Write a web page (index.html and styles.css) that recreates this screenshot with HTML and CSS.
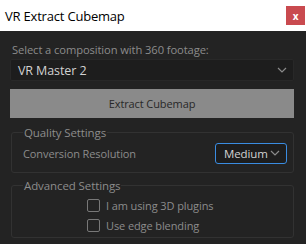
FILE: index.html
```html
<!DOCTYPE html>
<html lang="en">
  <head>
    <meta charset="UTF-8" />
    <title>VR Extract Cubemap</title>
    <link rel="stylesheet" href="styles.css">
  </head>
  <body>
    <div class="titlebar">
      <span class="title">VR Extract Cubemap</span>
      <span class="close">x</span>
    </div>

    <div class="panel">
      <div class="label">Select a composition with 360 footage:</div>
      <div class="select comp">
        <span>VR Master 2</span>
        <svg class="chev" width="10" height="6" viewBox="0 0 10 6"><path d="M1 1l4 4 4-4" fill="none" stroke="#8a8a8a" stroke-width="1.2"/></svg>
      </div>

      <button type="button" class="extract">Extract Cubemap</button>

      <fieldset class="group quality">
        <legend>Quality Settings</legend>
        <div class="row">
          <span class="row-label">Conversion Resolution</span>
          <div class="select res">
            <span>Medium</span>
            <svg class="chev" width="10" height="6" viewBox="0 0 10 6"><path d="M1 1l4 4 4-4" fill="none" stroke="#8a8a8a" stroke-width="1.2"/></svg>
          </div>
        </div>
      </fieldset>

      <fieldset class="group advanced">
        <legend>Advanced Settings</legend>
        <div class="checks">
          <label class="check"><span class="box"></span>I am using 3D plugins</label>
          <label class="check"><span class="box"></span>Use edge blending</label>
        </div>
      </fieldset>
    </div>
  </body>
</html>
```

FILE: styles.css
```css
body {
  margin: 0;
  padding: 0;
  width: 306px;
  height: 244px;
  background: rgb(35, 35, 35);
  font-family: "Open Sans", sans-serif;
  font-size: 11px;
  letter-spacing: -0.1px;
  overflow: hidden;
}
.titlebar {
  height: 31px;
  background: white;
  display: flex;
  align-items: center;
  justify-content: space-between;
}
.title {
  padding-left: 5px;
  font-size: 13px;
  color: black;
  letter-spacing: -0.2px;
}
.close {
  width: 19px;
  height: 19px;
  margin-right: 1px;
  background: rgb(201, 74, 79);
  color: white;
  font-size: 10px;
  font-weight: 700;
  display: flex;
  align-items: center;
  justify-content: center;
  line-height: 1;
}
.panel {
  padding: 9px 12px 0 10px;
}
.label {
  padding-left: 2px;
  color: rgb(140, 140, 140);
  height: 19px;
  line-height: 19px;
  font-size: 11.2px;
}
.select {
  display: flex;
  align-items: center;
  justify-content: space-between;
  box-sizing: border-box;
  background: rgb(29, 29, 29);
  border: 1px solid rgb(40, 40, 40);
  border-radius: 2px;
  color: rgb(210, 210, 210);
}
.comp {
  height: 22px;
  padding: 0 6px 0 7px;
  font-size: 12.5px;
}
.extract {
  display: block;
  width: 284px;
  height: 29px;
  margin-top: 8px;
  border: none;
  background: rgb(138, 138, 138);
  color: rgb(40, 40, 40);
  font-family: "Open Sans", sans-serif;
  font-size: 11px;
  letter-spacing: -0.1px;
}
.group {
  margin: 7px 0 0 1px;
  padding: 0 6px 6px 11px;
  border: 1px solid rgb(50, 50, 50);
  border-radius: 3px;
}
.group legend {
  padding: 0 1px;
  color: rgb(140, 140, 140);
  font-size: 11.5px;
}
.row {
  display: flex;
  align-items: center;
  justify-content: space-between;
  height: 26px;
}
.row-label {
  color: rgb(140, 140, 140);
}
.res {
  width: 72px;
  height: 21px;
  padding: 0 6px 0 8px;
  border: 1px solid rgb(58, 140, 225);
  border-radius: 3px;
  font-size: 11.5px;
}
.advanced {
  margin-top: 5px;
  padding-bottom: 2px;
}
.checks {
  padding: 2px 0 0 64px;
}
.check {
  display: flex;
  align-items: center;
  gap: 6px;
  height: 20px;
  color: rgb(140, 140, 140);
}
.box {
  width: 11px;
  height: 11px;
  border: 1px solid rgb(120, 120, 120);
  border-radius: 2px;
}
```
